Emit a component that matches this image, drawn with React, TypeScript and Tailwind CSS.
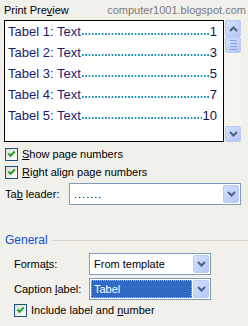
import React from 'react'

const rows = [
  { n: 1, page: '1' },
  { n: 2, page: '3' },
  { n: 3, page: '5' },
  { n: 4, page: '7' },
  { n: 5, page: '10' },
]

function CheckBox() {
  return (
    <span className="w-[13px] h-[13px] shrink-0 border border-[#1c5180] bg-gradient-to-br from-[#dcdcd5] to-white flex items-center justify-center">
      <svg width="9" height="9" viewBox="0 0 9 9">
        <path d="M1.5 3.5 L3.5 5.8 L7.8 1.5" stroke="#21a121" strokeWidth="2" fill="none" />
      </svg>
    </span>
  )
}

function Chevron({ up }: { up?: boolean }) {
  return (
    <svg width="9" height="6" viewBox="0 0 9 6">
      <path
        d={up ? 'M1 5 L4.5 1.5 L8 5' : 'M1 1 L4.5 4.5 L8 1'}
        stroke="#4d6185"
        strokeWidth="2"
        fill="none"
      />
    </svg>
  )
}

function BlueButton({ children, className = '' }: { children?: React.ReactNode; className?: string }) {
  return (
    <span
      className={`w-[16px] shrink-0 rounded-[2px] border border-[#b9cbf6] bg-gradient-to-br from-[#d4e0fe] to-[#b4c8f6] flex items-center justify-center ${className}`}
    >
      {children}
    </span>
  )
}

function Select({ width, children }: { width: string; children: React.ReactNode }) {
  return (
    <div className={`${width} h-[22px] border border-[#7f9db9] bg-white flex p-[1px]`}>
      <div className="flex-1 flex items-center min-w-0">{children}</div>
      <BlueButton className="h-full">
        <Chevron />
      </BlueButton>
    </div>
  )
}

export default function App() {
  return (
    <div className="w-[248px] h-[326px] bg-[#f1f0eb] overflow-hidden font-['Liberation_Sans',Arial,sans-serif] text-[11px] text-black flex flex-col">
      <div className="h-[20px] pt-[4px] pl-[4px] pr-[2px] flex justify-between leading-[13px]">
        <span>
          Print Pre<span className="underline">v</span>iew
        </span>
        <span className="text-[#7a7a7a]">computer1001.blogspot.com</span>
      </div>

      <div className="h-[122px] pl-[4px] flex">
        <div className="w-[220px] h-full border border-black bg-white flex flex-col text-[13px] text-[#1d1d6e] pl-[3px] pr-[6px]">
          {rows.map((r) => (
            <div key={r.n} className="h-[21px] flex items-center whitespace-nowrap">
              <span>Tabel {r.n}: Text</span>
              <span className="flex-1 self-end mb-[7px] ml-[1px] mr-[1px] h-[2px] bg-[linear-gradient(to_right,#1a93b5_0_2px,transparent_2px_100%)] bg-[length:3.3px_2px] bg-repeat-x" />
              <span className="text-[#10104a]">{r.page}</span>
            </div>
          ))}
        </div>
        <div className="w-[16px] ml-[1px] h-full flex flex-col bg-[#f5f4ef]">
          <BlueButton className="h-[17px]">
            <Chevron up />
          </BlueButton>
          <BlueButton className="h-[16px] flex-col gap-[2px]">
            <span className="w-[7px] h-[1px] bg-[#8aa4e0]" />
            <span className="w-[7px] h-[1px] bg-[#8aa4e0]" />
            <span className="w-[7px] h-[1px] bg-[#8aa4e0]" />
            <span className="w-[7px] h-[1px] bg-[#8aa4e0]" />
          </BlueButton>
          <div className="flex-1" />
          <BlueButton className="h-[16px]">
            <Chevron />
          </BlueButton>
        </div>
      </div>

      <div className="mt-[6px] pl-[5px] flex flex-col gap-[5px]">
        <label className="h-[13px] flex items-center gap-[4px]">
          <CheckBox />
          <span>
            <span className="underline">S</span>how page numbers
          </span>
        </label>
        <label className="h-[13px] flex items-center gap-[4px]">
          <CheckBox />
          <span>
            <span className="underline">R</span>ight align page numbers
          </span>
        </label>
      </div>

      <div className="mt-[4px] pl-[5px] flex items-center">
        <span className="w-[64px]">
          Ta<span className="underline">b</span> leader:
        </span>
        <Select width="w-[172px]">
          <span className="pl-[3px] tracking-[1px]">.......</span>
        </Select>
      </div>

      <div className="mt-[29px] h-[12px] pl-[5px] flex items-center gap-[4px]">
        <span className="text-[#1550d4] text-[12px]">General</span>
        <span className="flex-1 h-[1px] bg-[#d6d4c8]" />
      </div>

      <div className="mt-[7px] pl-[14px] flex items-center">
        <span className="w-[75px]">
          Forma<span className="underline">t</span>s:
        </span>
        <Select width="w-[122px]">
          <span className="pl-[3px]">From template</span>
        </Select>
      </div>

      <div className="mt-[3px] pl-[14px] flex items-center">
        <span className="w-[75px]">
          Caption <span className="underline">l</span>abel:
        </span>
        <Select width="w-[122px]">
          <span className="h-full flex-1 mr-[1px] bg-[#316ac5] border border-dotted border-[#f0b030] text-white pl-[2px] flex items-center">
            Tabel
          </span>
        </Select>
      </div>

      <label className="mt-[4px] pl-[14px] h-[13px] flex items-center gap-[4px]">
        <CheckBox />
        <span>
          Include label and <span className="underline">n</span>umber
        </span>
      </label>
    </div>
  )
}
